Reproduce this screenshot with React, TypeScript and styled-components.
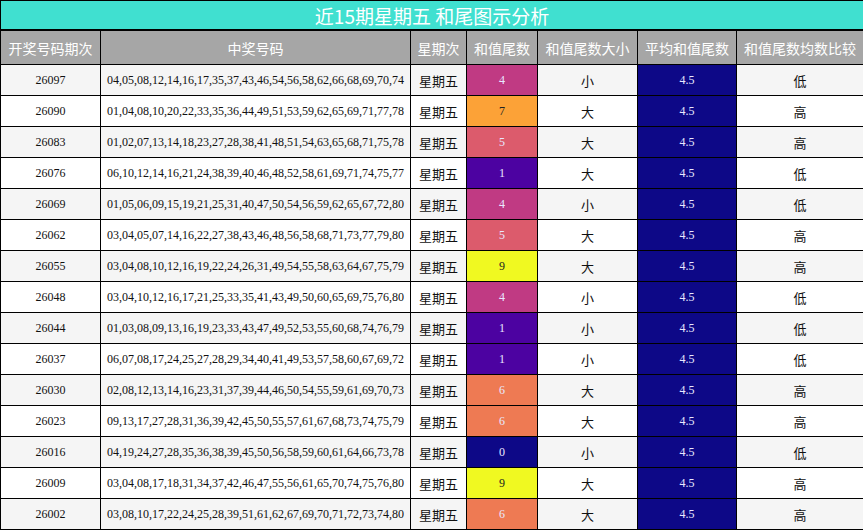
import styled, { createGlobalStyle } from 'styled-components';

const Global = createGlobalStyle`
  body { margin: 0; background: #fff; }
`;

const rows: [string, string, number, string, string][] = [
  ['26097', '04,05,08,12,14,16,17,35,37,43,46,54,56,58,62,66,68,69,70,74', 4, '小', '低'],
  ['26090', '01,04,08,10,20,22,33,35,36,44,49,51,53,59,62,65,69,71,77,78', 7, '大', '高'],
  ['26083', '01,02,07,13,14,18,23,27,28,38,41,48,51,54,63,65,68,71,75,78', 5, '大', '高'],
  ['26076', '06,10,12,14,16,21,24,38,39,40,46,48,52,58,61,69,71,74,75,77', 1, '大', '低'],
  ['26069', '01,05,06,09,15,19,21,25,31,40,47,50,54,56,59,62,65,67,72,80', 4, '小', '低'],
  ['26062', '03,04,05,07,14,16,22,27,38,43,46,48,56,58,68,71,73,77,79,80', 5, '大', '高'],
  ['26055', '03,04,08,10,12,16,19,22,24,26,31,49,54,55,58,63,64,67,75,79', 9, '大', '高'],
  ['26048', '03,04,10,12,16,17,21,25,33,35,41,43,49,50,60,65,69,75,76,80', 4, '小', '低'],
  ['26044', '01,03,08,09,13,16,19,23,33,43,47,49,52,53,55,60,68,74,76,79', 1, '小', '低'],
  ['26037', '06,07,08,17,24,25,27,28,29,34,40,41,49,53,57,58,60,67,69,72', 1, '小', '低'],
  ['26030', '02,08,12,13,14,16,23,31,37,39,44,46,50,54,55,59,61,69,70,73', 6, '大', '高'],
  ['26023', '09,13,17,27,28,31,36,39,42,45,50,55,57,61,67,68,73,74,75,79', 6, '大', '高'],
  ['26016', '04,19,24,27,28,35,36,38,39,45,50,56,58,59,60,61,64,66,73,78', 0, '小', '低'],
  ['26009', '03,04,08,17,18,31,34,37,42,46,47,55,56,61,65,70,74,75,76,80', 9, '大', '高'],
  ['26002', '03,08,10,17,22,24,25,28,39,51,61,62,67,69,70,71,72,73,74,80', 6, '大', '高'],
];

const palette: Record<number, string> = {
  0: '#0d0887', 1: '#4c02a1', 4: '#c03a83', 5: '#dc5b6c',
  6: '#ee7a53', 7: '#fca237', 9: '#f0f921',
};

const Table = styled.table`
  width: 863px;
  border-collapse: collapse;
  font-family: "Noto Sans CJK SC", "Noto Sans", sans-serif;
  table-layout: fixed;
`;

const Col = styled.col<{ $w: number }>`
  width: ${(p) => p.$w}px;
`;

const Title = styled.th`
  height: 28px;
  background: #40e0d0;
  color: #fff;
  font-size: 19px;
  font-weight: normal;
  border: 1px solid #000;
  border-bottom-width: 2px;
  padding: 0;
`;

const Head = styled.th`
  height: 33px;
  background: #a6a6a6;
  color: #fff;
  font-size: 14px;
  font-weight: normal;
  border: 1px solid #000;
  padding: 0;
  white-space: nowrap;
`;

const Row = styled.tr<{ $alt: boolean }>`
  background: ${(p) => (p.$alt ? '#f5f5f5' : '#fff')};
`;

const Cell = styled.td<{ $serif?: boolean; $bg?: string; $light?: boolean }>`
  height: 30px;
  padding: 0;
  text-align: center;
  border: 1px solid #000;
  font-size: ${(p) => (p.$serif ? '12px' : '13px')};
  font-family: ${(p) => (p.$serif ? '"Liberation Serif", serif' : 'inherit')};
  background: ${(p) => p.$bg || 'transparent'};
  color: ${(p) => (p.$bg ? (p.$light ? '#222' : '#e8e8ff') : '#111')};
  white-space: nowrap;
  overflow: hidden;
`;

const heads: [string, number][] = [
  ['开奖号码期次', 100], ['中奖号码', 310], ['星期次', 56], ['和值尾数', 71],
  ['和值尾数大小', 100], ['平均和值尾数', 99], ['和值尾数均数比较', 127],
];

export default function App() {
  return (
    <>
      <Global />
      <Table>
        <colgroup>
          {heads.map(([t, w]) => <Col key={t} $w={w} />)}
        </colgroup>
        <thead>
          <tr><Title colSpan={7}>近15期星期五 和尾图示分析</Title></tr>
          <tr>{heads.map(([t]) => <Head key={t}>{t}</Head>)}</tr>
        </thead>
        <tbody>
          {rows.map(([id, nums, tail, size, cmp], i) => (
            <Row key={id} $alt={i % 2 === 0}>
              <Cell $serif>{id}</Cell>
              <Cell $serif>{nums}</Cell>
              <Cell>星期五</Cell>
              <Cell $serif $bg={palette[tail]} $light={tail === 7 || tail === 9}>{tail}</Cell>
              <Cell>{size}</Cell>
              <Cell $serif $bg="#0d0887">4.5</Cell>
              <Cell>{cmp}</Cell>
            </Row>
          ))}
        </tbody>
      </Table>
    </>
  );
}
